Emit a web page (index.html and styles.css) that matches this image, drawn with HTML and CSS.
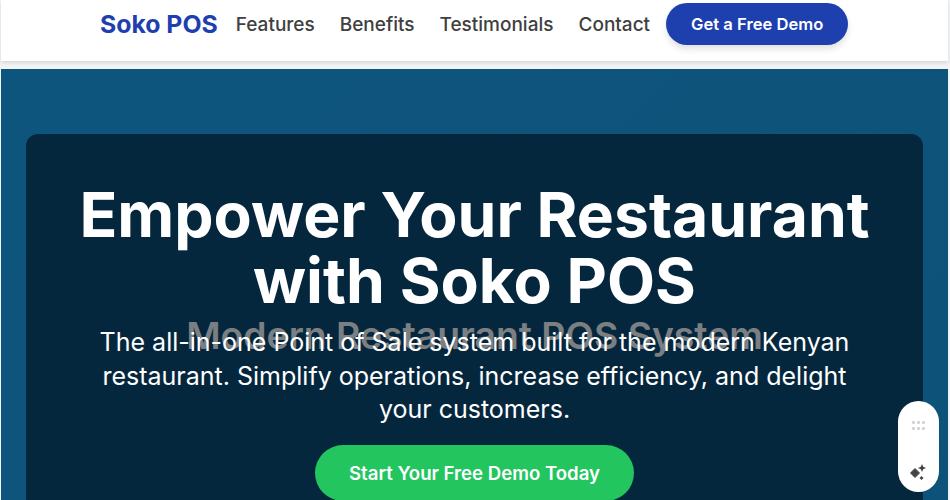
FILE: index.html
```html
<!DOCTYPE html>
<html lang="en">
<head>
  <meta charset="UTF-8">
  <title>Soko POS</title>
  <link rel="stylesheet" href="styles.css">
</head>
<body>

<!-- Header -->
<header class="header">
  <a class="logo" href="#">Soko POS</a>
  <nav class="nav">
    <a href="#">Features</a>
    <a href="#">Benefits</a>
    <a href="#">Testimonials</a>
    <a href="#">Contact</a>
  </nav>
  <a class="header-btn" href="#">Get a Free Demo</a>
</header>

<!-- Hero -->
<section class="hero">
  <div class="card">
    <h1>Empower Your Restaurant with Soko POS</h1>
    <h2>Modern Restaurant POS System</h2>
    <p>The all-in-one Point of Sale system built for the modern Kenyan restaurant. Simplify operations, increase efficiency, and delight your customers.</p>
    <a class="cta" href="#">Start Your Free Demo Today</a>
  </div>
</section>

<!-- Floating widget -->
<div class="widget">
  <svg class="dots" width="14" height="10" viewBox="0 0 14 10" fill="#d4d4d4">
    <rect x="0" y="0" width="3" height="3" rx="1"/>
    <rect x="5" y="0" width="3" height="3" rx="1"/>
    <rect x="10" y="0" width="3" height="3" rx="1"/>
    <rect x="0" y="6" width="3" height="3" rx="1"/>
    <rect x="5" y="6" width="3" height="3" rx="1"/>
    <rect x="10" y="6" width="3" height="3" rx="1"/>
  </svg>
  <svg class="spark" width="18" height="18" viewBox="0 0 18 18" fill="#444">
    <path d="M6 5.5 L10.5 10 L6 14.5 L1.5 10 Z" stroke="#444" stroke-linejoin="round"/>
    <path d="M13 1 L14.2 3.8 L17 5 L14.2 6.2 L13 9 L11.8 6.2 L9 5 L11.8 3.8 Z"/>
    <path d="M12.5 13 L14.5 15 L12.5 17 L10.5 15 Z"/>
  </svg>
</div>

</body>
</html>
```

FILE: styles.css
```css
* {
  box-sizing: border-box;
}

html, body {
  height: 100%;
  overflow: hidden;
}

body {
  font-family: Inter, sans-serif;
  margin: 0;
  padding: 0 2px 0 1px;
  background-color: #f3f4f6;
}

a {
  text-decoration: none;
}

.header {
  display: flex;
  align-items: flex-start;
  height: 61px;
  padding: 3px 0 0 99px;
  background-color: #fff;
  box-shadow: 0 2px 4px rgba(0, 0, 0, 0.12);
}

.logo {
  margin-top: 5px;
  font-size: 24.8px;
  line-height: 32px;
  font-weight: 700;
  color: #1e40af;
}

.nav {
  display: flex;
  gap: 25px;
  margin-left: 18px;
  margin-top: 9px;
}

.nav a {
  font-size: 19px;
  line-height: 26px;
  font-weight: 500;
  color: #404040;
}

.header-btn {
  margin-left: 16px;
  padding: 0 25px;
  height: 42px;
  line-height: 42px;
  border-radius: 21px;
  font-size: 16.6px;
  font-weight: 600;
  color: #fff;
  background-color: #1e40af;
  box-shadow: 0 4px 6px rgba(0, 0, 0, 0.12);
}

.hero {
  margin-top: 8px;
  height: 431px;
  padding: 65px 25px 0;
  background: linear-gradient(135deg, #0e557d, #0d5279);
  overflow: hidden;
}

.card {
  height: 500px;
  padding: 48px 40px;
  text-align: center;
  background-color: #05273e;
  border-radius: 12px;
}

h1 {
  margin: 0;
  font-size: 62.4px;
  line-height: 66px;
  font-weight: 700;
  color: #fff;
}

h2 {
  margin: 0 0 -44px;
  font-size: 37.3px;
  line-height: 44px;
  font-weight: 600;
  color: #7b7f82;
}

p {
  width: 768px;
  margin: 12px auto 18px;
  font-size: 25px;
  line-height: 33.6px;
  color: #fff;
}

.cta {
  display: inline-block;
  padding: 0 34px;
  height: 56px;
  line-height: 56px;
  border-radius: 28px;
  font-size: 18.6px;
  font-weight: 600;
  color: #fff;
  background-color: #22c55e;
}

.widget {
  position: fixed;
  left: 898px;
  top: 401px;
  width: 41px;
  height: 91px;
  display: flex;
  flex-direction: column;
  align-items: center;
  justify-content: space-between;
  padding: 20px 0 11px;
  background-color: #fff;
  border-radius: 21px;
}

.spark {
  margin-left: -1px;
}
```
